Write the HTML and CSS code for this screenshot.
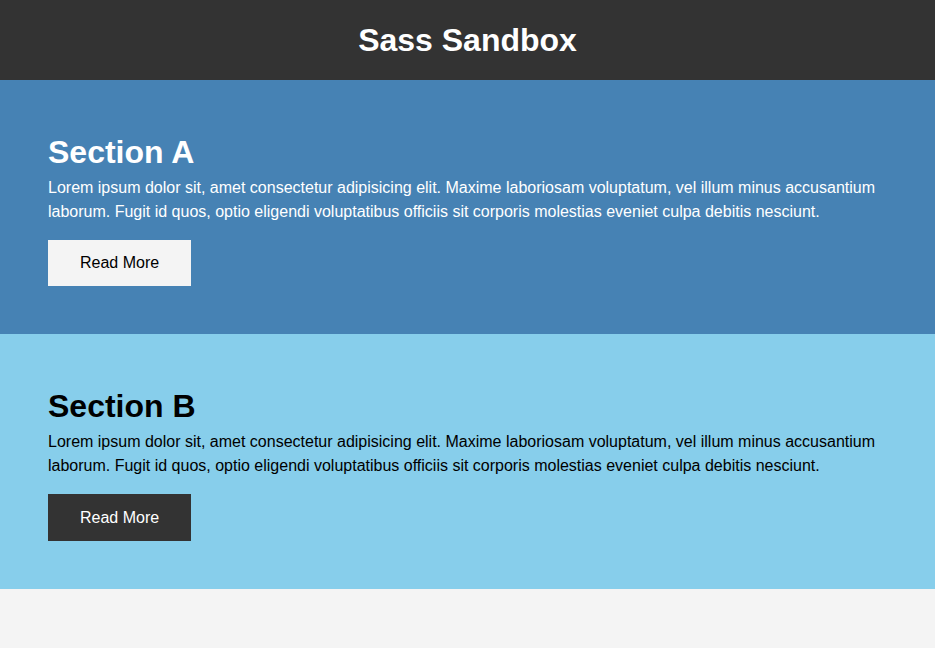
FILE: index.html
```html
<!DOCTYPE html>
<html lang="en">
<head>
<meta charset="UTF-8">
<title>Sass Sandbox</title>
<link rel="stylesheet" href="styles.css">
</head>
<body>
<header class="header">
  <h1 class="header-title">Sass Sandbox</h1>
</header>
<section class="section section-a">
  <h2 class="section-title">Section A</h2>
  <p class="section-text">Lorem ipsum dolor sit, amet consectetur adipisicing elit. Maxime laboriosam voluptatum, vel illum minus accusantium laborum. Fugit id quos, optio eligendi voluptatibus officiis sit corporis molestias eveniet culpa debitis nesciunt.</p>
  <a href="#" class="btn btn-light">Read More</a>
</section>
<section class="section section-b">
  <h2 class="section-title">Section B</h2>
  <p class="section-text">Lorem ipsum dolor sit, amet consectetur adipisicing elit. Maxime laboriosam voluptatum, vel illum minus accusantium laborum. Fugit id quos, optio eligendi voluptatibus officiis sit corporis molestias eveniet culpa debitis nesciunt.</p>
  <a href="#" class="btn btn-dark">Read More</a>
</section>
</body>
</html>
```
FILE: styles.css
```css
* {
  box-sizing: border-box;
  margin: 0;
  padding: 0;
}

body {
  font-family: "Liberation Sans", Arial, Helvetica, sans-serif;
  font-size: 16px;
  line-height: 1.5;
  background: #f4f4f4;
  color: #333;
}

.header {
  background: #333;
  color: #fff;
  text-align: center;
  padding: 16px;
}

.header-title {
  font-size: 32px;
  font-weight: bold;
}

.section {
  padding: 48px;
}

.section-a {
  background: #4682b4;
  color: #fff;
}

.section-b {
  background: #87ceeb;
  color: #000;
}

.section-title {
  font-size: 32px;
  font-weight: bold;
}

.section-text {
  margin-bottom: 16px;
}

.btn {
  display: inline-block;
  padding: 0.7rem 2rem;
  text-decoration: none;
  font-size: 16px;
}

.btn-light {
  background: #f4f4f4;
  color: #000;
}

.btn-dark {
  background: #333;
  color: #fff;
}
```
